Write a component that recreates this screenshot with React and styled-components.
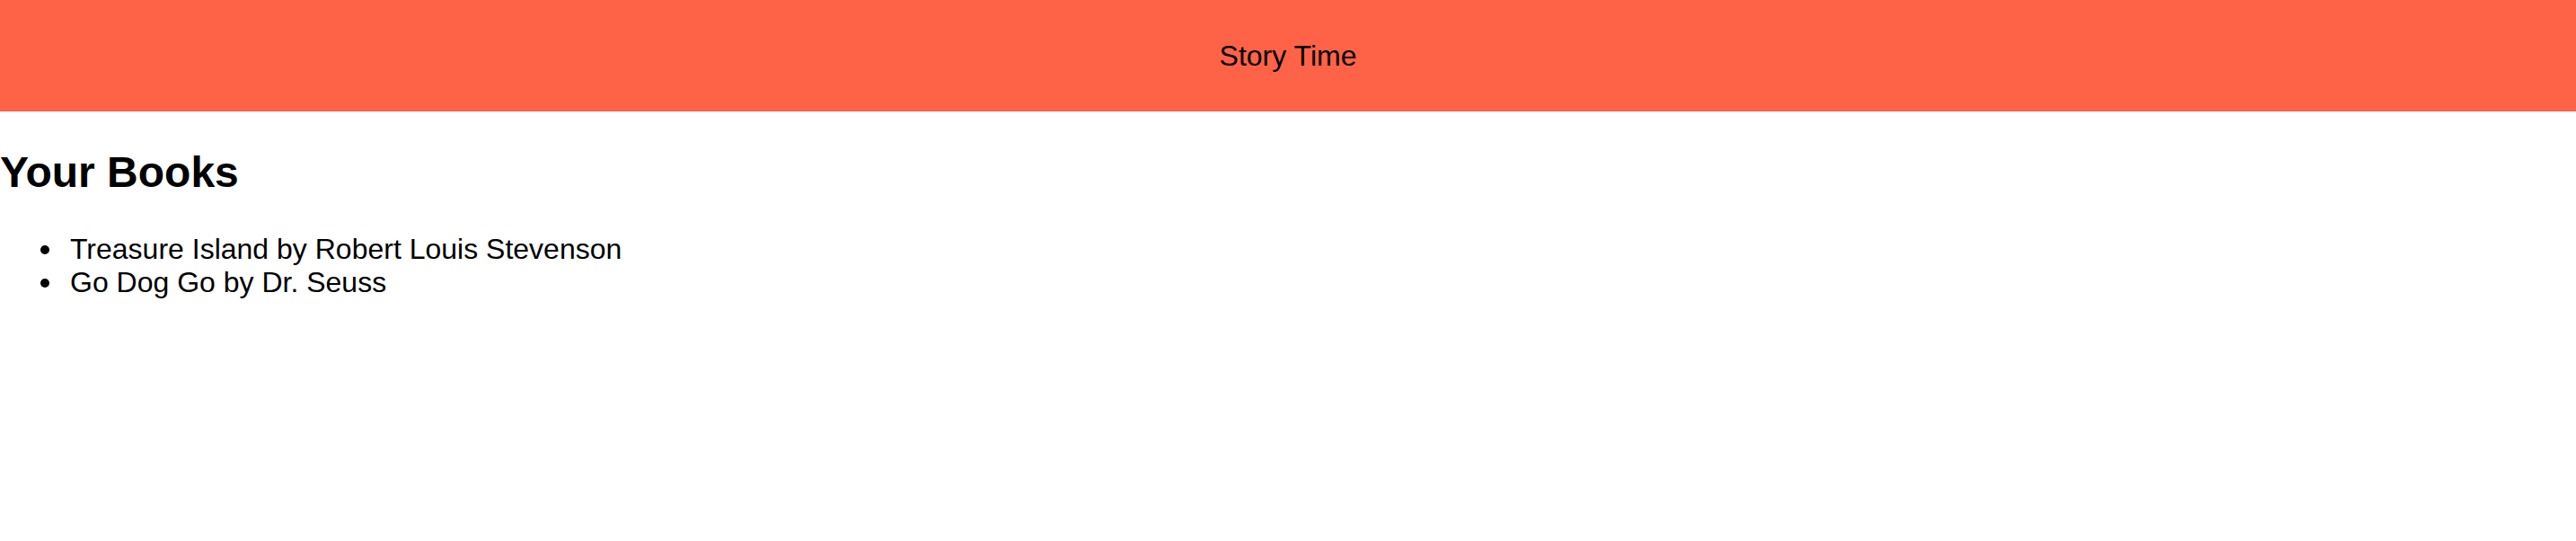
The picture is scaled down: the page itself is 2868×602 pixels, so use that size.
import React from "react";
import styled, { createGlobalStyle } from "styled-components";

const GlobalStyle = createGlobalStyle`
  html, body {
    margin: 0;
    padding: 0;
    background: #ffffff;
  }
  body {
    font-family: "Liberation Sans", Arial, Helvetica, sans-serif;
    font-size: 32px;
    color: #000000;
  }
`;

const Header = styled.header`
  height: 124px;
  background: #ff6347;
  display: flex;
  align-items: center;
  justify-content: center;
`;

const Title = styled.span`
  font-size: 32px;
  color: #000;
`;

const Main = styled.main`
  display: block;
`;

const Heading = styled.h2`
  font-size: 48px;
  font-weight: bold;
  margin: 0.83em 0;
`;

const BookList = styled.ul`
  margin: 32px 0;
  padding-left: 78px;
  list-style: none;
`;

const BookItem = styled.li`
  position: relative;
  font-size: 32px;

  &::before {
    content: "";
    position: absolute;
    left: -33px;
    top: 14px;
    width: 10px;
    height: 10px;
    border-radius: 50%;
    background: #000;
  }
`;

const books = [
  { title: "Treasure Island", author: "Robert Louis Stevenson" },
  { title: "Go Dog Go", author: "Dr. Seuss" },
];

export default function App() {
  return (
    <>
      <GlobalStyle />
      <Header>
        <Title>Story Time</Title>
      </Header>
      <Main>
        <Heading>Your Books</Heading>
        <BookList>
          {books.map((b) => (
            <BookItem key={b.title}>
              {b.title} by {b.author}
            </BookItem>
          ))}
        </BookList>
      </Main>
    </>
  );
}
